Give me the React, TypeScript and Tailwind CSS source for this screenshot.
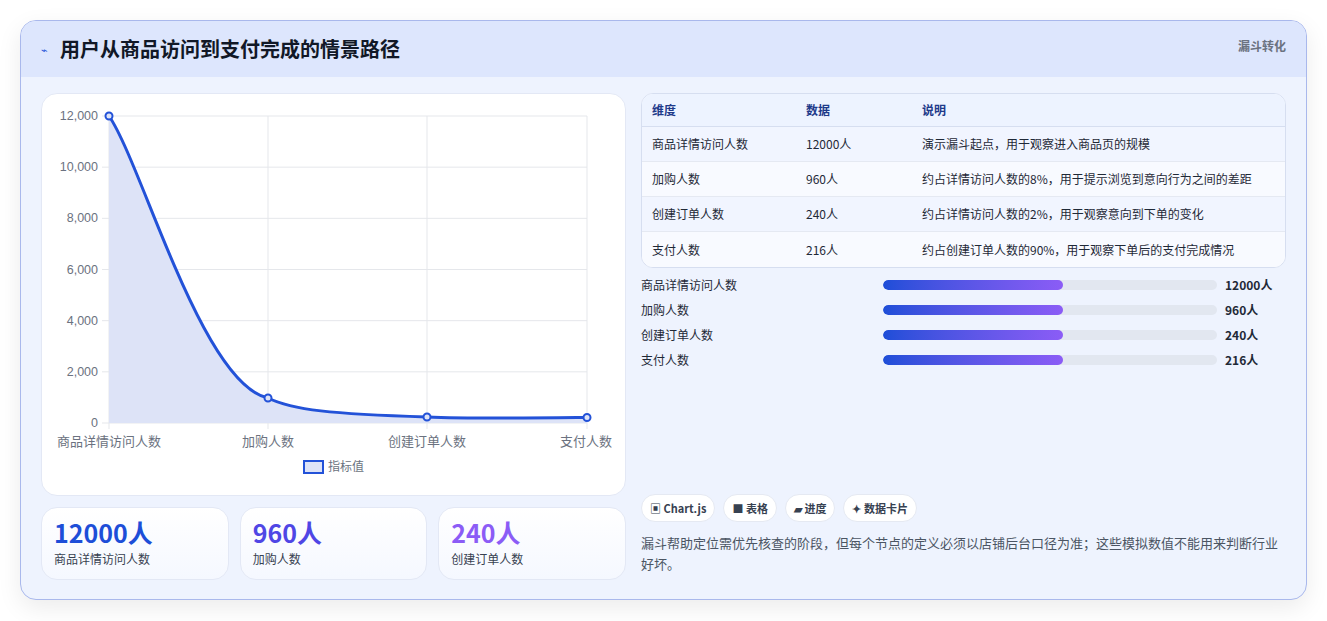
const font = { fontFamily: '"Noto Sans CJK SC", "Liberation Sans", sans-serif' };

const rows = [
  { name: "商品详情访问人数", value: "12000人", note: "演示漏斗起点，用于观察进入商品页的规模" },
  { name: "加购人数", value: "960人", note: "约占详情访问人数的8%，用于提示浏览到意向行为之间的差距" },
  { name: "创建订单人数", value: "240人", note: "约占详情访问人数的2%，用于观察意向到下单的变化" },
  { name: "支付人数", value: "216人", note: "约占创建订单人数的90%，用于观察下单后的支付完成情况" },
];

function Chart() {
  const ys = [0, 2000, 4000, 6000, 8000, 10000, 12000];
  const xs = [67, 226, 385, 545];
  const y = (v: number) => 329 - (v / 12000) * 307;
  const line =
    "M67,22 C100,70 160,290 226,304 C250,316 290,320 385,323 C430,325 500,324 545,323.5";
  return (
    <svg width="585" height="403" className="block">
      {ys.map((v) => (
        <g key={v}>
          <line x1="60" x2="545" y1={y(v)} y2={y(v)} stroke="#e5e7eb" />
          <text x="56" y={y(v) + 4} textAnchor="end" fontSize="12.5" fill="#6b7280" fontFamily="Liberation Sans, sans-serif">
            {v.toLocaleString("en-US")}
          </text>
        </g>
      ))}
      {xs.map((x) => (
        <line key={x} x1={x} x2={x} y1="22" y2="335" stroke="#e5e7eb" />
      ))}
      <path d={line + " L545,329 L67,329 Z"} fill="#dde3f7" />
      <path d={line} fill="none" stroke="#2352d8" strokeWidth="3" />
      {[
        [67, 22],
        [226, 304],
        [385, 323],
        [545, 323.5],
      ].map(([cx, cy]) => (
        <circle key={cx} cx={cx} cy={cy} r="3.5" fill="#dde3f7" stroke="#2352d8" strokeWidth="2" />
      ))}
      {["商品详情访问人数", "加购人数", "创建订单人数", "支付人数"].map((t, i) => (
        <text key={t} x={i === 3 ? 544 : xs[i]} y="352" textAnchor="middle" fontSize="13" fill="#6b7280" style={font}>
          {t}
        </text>
      ))}
      <rect x="262" y="367" width="19" height="12" fill="#dde3f7" stroke="#2352d8" strokeWidth="2" />
      <text x="286" y="377" fontSize="12" fill="#6b7280" style={font}>指标值</text>
    </svg>
  );
}

export default function App() {
  return (
    <div className="w-[1327px] h-[621px] bg-white pt-5 pl-5" style={font}>
      <div className="w-[1287px] h-[580px] rounded-2xl border border-[#a9b8ec] bg-[#eef3fe] shadow-[0_8px_24px_rgba(0,0,0,0.08)] overflow-hidden">
        <div className="h-[56px] bg-[#dde6fd] flex items-center justify-between pl-5 pr-5">
          <div className="flex items-center gap-3">
            <span className="text-[11px] text-[#2352d8]">⌁</span>
            <span className="text-[20px] font-bold text-[#111827]">用户从商品访问到支付完成的情景路径</span>
          </div>
          <span className="text-[12px] font-bold text-[#6b7280] self-start mt-4">漏斗转化</span>
        </div>
        <div className="flex gap-[15px] px-5 pt-[16px]">
          <div className="w-[585px] flex flex-col gap-[11px]">
            <div className="h-[403px] bg-white rounded-2xl border border-[#e3e8f5]">
              <Chart />
            </div>
            <div className="flex gap-[11px]">
              {[
                ["12000人", "text-[#1d4ed8]", "商品详情访问人数"],
                ["960人", "text-[#4f46e5]", "加购人数"],
                ["240人", "text-[#8b5cf6]", "创建订单人数"],
              ].map(([v, c, l]) => (
                <div key={l} className="flex-1 h-[73px] rounded-2xl border border-[#e3e8f5] bg-gradient-to-b from-white to-[#f5f8ff] px-3 pt-2">
                  <div className={`text-[25px] font-bold leading-8 ${c}`}>{v}</div>
                  <div className="text-[12px] text-[#374151] mt-0.5">{l}</div>
                </div>
              ))}
            </div>
          </div>
          <div className="flex-1 flex flex-col">
            <div className="rounded-xl border border-[#d6def0] overflow-hidden bg-white text-[12px]">
              <div className="flex h-[33px] items-center bg-[#edf3ff] text-[#1e3a8a] font-bold border-b border-[#d6def0]">
                <div className="w-[164px] pl-2.5">维度</div>
                <div className="w-[116px]">数据</div>
                <div>说明</div>
              </div>
              {rows.map((r, i) => (
                <div key={r.name} className={`flex h-[35px] items-center text-[#1f2937] ${i < 3 ? "border-b border-[#e5e9f2]" : ""} ${i % 2 === 0 ? "bg-[#f1f5ff]" : "bg-[#f8faff]"}`}>
                  <div className="w-[164px] pl-2.5">{r.name}</div>
                  <div className="w-[116px]">{r.value}</div>
                  <div>{r.note}</div>
                </div>
              ))}
            </div>
            <div className="flex flex-col gap-[11px] mt-[10px] text-[12px] text-[#1f2937]">
              {rows.map((r) => (
                <div key={r.name} className="flex items-center h-[14px]">
                  <div className="w-[242px]">{r.name}</div>
                  <div className="w-[334px] h-[10px] rounded-full bg-[#e2e7f0] overflow-hidden">
                    <div className="w-[180px] h-full rounded-full bg-gradient-to-r from-[#1d4ed8] to-[#8b5cf6]" />
                  </div>
                  <div className="ml-2 font-bold">{r.value}</div>
                </div>
              ))}
            </div>
            <div className="flex gap-2 mt-[127px] text-[11px] font-bold text-[#374151]">
              {["▣ Chart.js", "■ 表格", "▰ 进度", "✦ 数据卡片"].map((t) => (
                <div key={t} className="h-7 px-2 flex items-center rounded-full bg-white border border-[#e5e9f2]">{t}</div>
              ))}
            </div>
            <p className="mt-2.5 text-[13px] leading-[21px] text-[#4b5563]">
              漏斗帮助定位需优先核查的阶段，但每个节点的定义必须以店铺后台口径为准；这些模拟数值不能用来判断行业好坏。
            </p>
          </div>
        </div>
      </div>
    </div>
  );
}
